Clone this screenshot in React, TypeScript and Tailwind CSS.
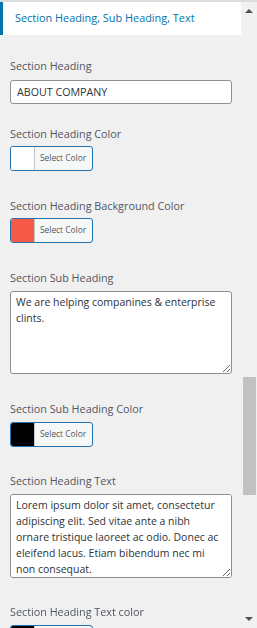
import React from "react";

const labelCls = "block text-[10.8px] leading-[16px] text-[#50575e]";

function ColorButton({ color, className = "" }: { color: string; className?: string }) {
  return (
    <button
      type="button"
      className={`flex h-[25px] w-[83px] shrink-0 overflow-hidden rounded-[3px] border border-[#2271b1] bg-[#f6f7f7] ${className}`}
    >
      <span className="h-full w-[24px] border-r border-[#c3c4c7]" style={{ backgroundColor: color }} />
      <span className="flex h-full items-center pl-[5px] text-[8.4px] text-[#50575e]">Select Color</span>
    </button>
  );
}

const taCls =
  "block w-[222px] shrink-0 rounded-[3px] border border-[#8c8f94] bg-white pl-[5px] pr-[8px] py-[2px] text-[10.5px] leading-[16px] text-[#2c3338] outline-none";

export default function App() {
  return (
    <div className="flex h-[628px] w-[257px] overflow-hidden border-t-2 border-[#dcdcde] bg-[#f0f0f1] font-['Open_Sans',sans-serif]">
      {/* panel */}
      <div className="w-[241px] shrink-0">
        <div className="flex h-[33px] items-center border-l-[3px] border-[#0073aa] bg-white pl-[12px] text-[10.9px] text-[#0073aa]">
          Section Heading, Sub Heading, Text
        </div>

        <div className="flex flex-col px-[10px]">
          <label className={`${labelCls} mt-[23px]`}>Section Heading</label>
          <input
            defaultValue="ABOUT COMPANY"
            className="mt-[6px] h-[24px] w-[222px] shrink-0 rounded-[3px] border border-[#8c8f94] bg-white px-[6px] text-[10.7px] text-[#2c3338] outline-none"
          />

          <label className={`${labelCls} mt-[22px]`}>Section Heading Color</label>
          <ColorButton color="#ffffff" className="mt-[4px]" />

          <label className={`${labelCls} mt-[27px]`}>Section Heading Background Color</label>
          <ColorButton color="#f55a47" className="mt-[4px]" />

          <label className={`${labelCls} mt-[27px]`}>Section Sub Heading</label>
          <textarea
            defaultValue="We are helping companines & enterprise clints."
            className={`${taCls} mt-[5px] h-[83px]`}
          />

          <label className={`${labelCls} mt-[27px]`}>Section Sub Heading Color</label>
          <ColorButton color="#000000" className="mt-[5px]" />

          <label className={`${labelCls} mt-[26px]`}>Section Heading Text</label>
          <textarea
            defaultValue="Lorem ipsum dolor sit amet, consectetur adipiscing elit. Sed vitae ante a nibh ornare tristique laoreet ac odio. Donec ac eleifend lacus. Etiam bibendum nec mi non consequat."
            className={`${taCls} mt-[5px] h-[84px]`}
          />

          <label className={`${labelCls} mt-[26px]`}>Section Heading Text color</label>
          <ColorButton color="#000000" className="mt-[5px]" />
        </div>
      </div>

      {/* scrollbar */}
      <div className="flex w-[16px] shrink-0 flex-col bg-[#f1f1f1]">
        <div className="flex h-[14px] shrink-0 items-center justify-center pt-[3px]">
          <svg width="8" height="5" viewBox="0 0 8 5">
            <path d="M0 5 L4 1 L8 5 Z" fill="#505050" />
          </svg>
        </div>
        <div className="ml-[2px] mt-[361px] h-[118px] w-[13px] shrink-0 bg-[#c1c1c1]" />
        <div className="flex-1" />
        <div className="flex h-[14px] shrink-0 items-center justify-center pb-[4px]">
          <svg width="8" height="5" viewBox="0 0 8 5">
            <path d="M0 0 L8 0 L4 4 Z" fill="#505050" />
          </svg>
        </div>
      </div>
    </div>
  );
}
